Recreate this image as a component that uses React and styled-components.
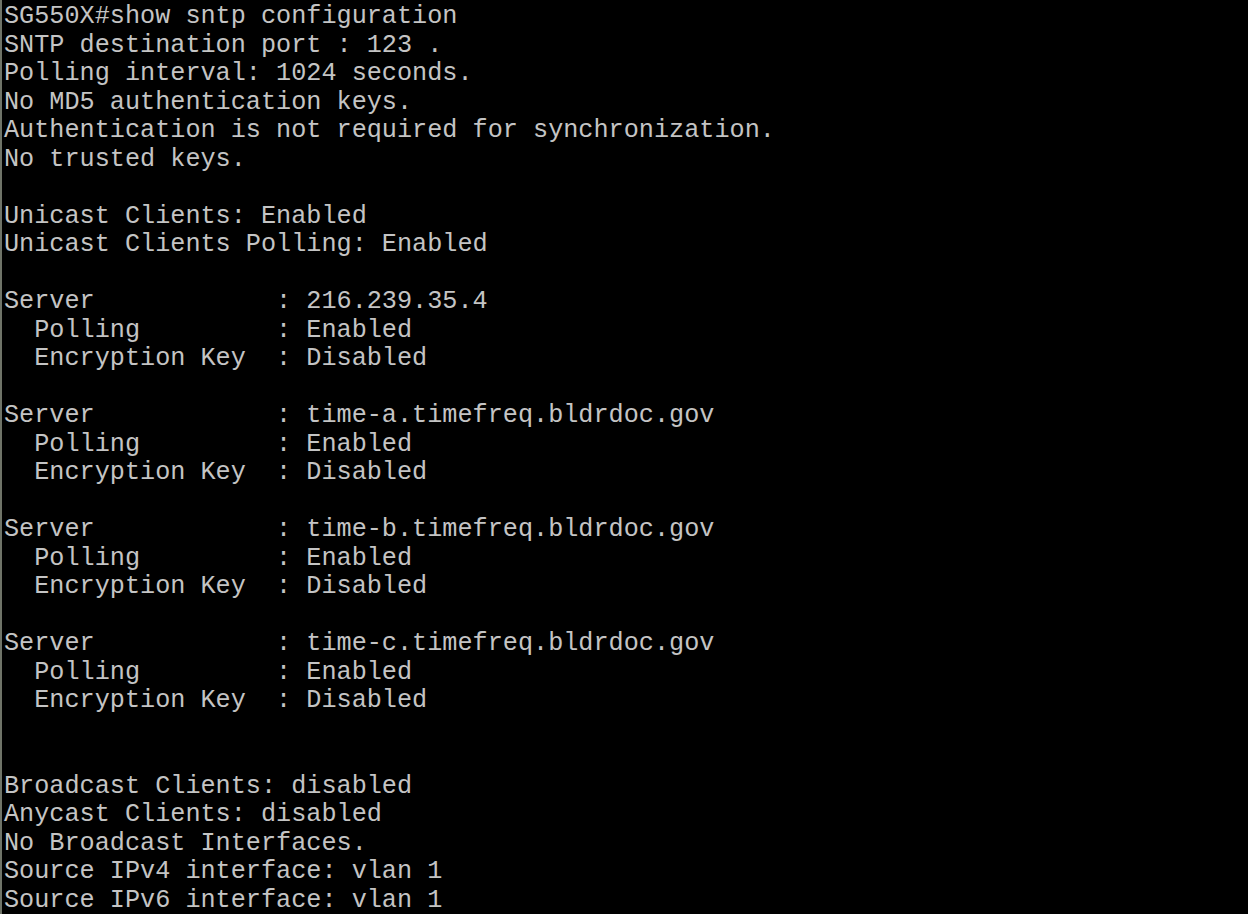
import styled, { createGlobalStyle } from "styled-components";

const GlobalStyle = createGlobalStyle`
  html, body {
    margin: 0;
    padding: 0;
    background: #000;
  }
`;

const Screen = styled.div`
  width: 1248px;
  height: 914px;
  box-sizing: border-box;
  background: #000;
  border-left: 2px solid #6f7468;
  overflow: hidden;
`;

const Output = styled.pre`
  margin: 0;
  padding: 3px 0 0 2px;
  font-family: "Liberation Mono", "Courier New", monospace;
  font-size: 25.2px;
  line-height: 28.52px;
  color: #c4c4c4;
  white-space: pre;
`;

const lines = [
  "SG550X#show sntp configuration",
  "SNTP destination port : 123 .",
  "Polling interval: 1024 seconds.",
  "No MD5 authentication keys.",
  "Authentication is not required for synchronization.",
  "No trusted keys.",
  "",
  "Unicast Clients: Enabled",
  "Unicast Clients Polling: Enabled",
  "",
  "Server            : 216.239.35.4",
  "  Polling         : Enabled",
  "  Encryption Key  : Disabled",
  "",
  "Server            : time-a.timefreq.bldrdoc.gov",
  "  Polling         : Enabled",
  "  Encryption Key  : Disabled",
  "",
  "Server            : time-b.timefreq.bldrdoc.gov",
  "  Polling         : Enabled",
  "  Encryption Key  : Disabled",
  "",
  "Server            : time-c.timefreq.bldrdoc.gov",
  "  Polling         : Enabled",
  "  Encryption Key  : Disabled",
  "",
  "",
  "Broadcast Clients: disabled",
  "Anycast Clients: disabled",
  "No Broadcast Interfaces.",
  "Source IPv4 interface: vlan 1",
  "Source IPv6 interface: vlan 1",
];

const App = () => {
  return (
    <>
      <GlobalStyle />
      <Screen>
        <Output>{lines.join("\n")}</Output>
      </Screen>
    </>
  );
};

export default App;
